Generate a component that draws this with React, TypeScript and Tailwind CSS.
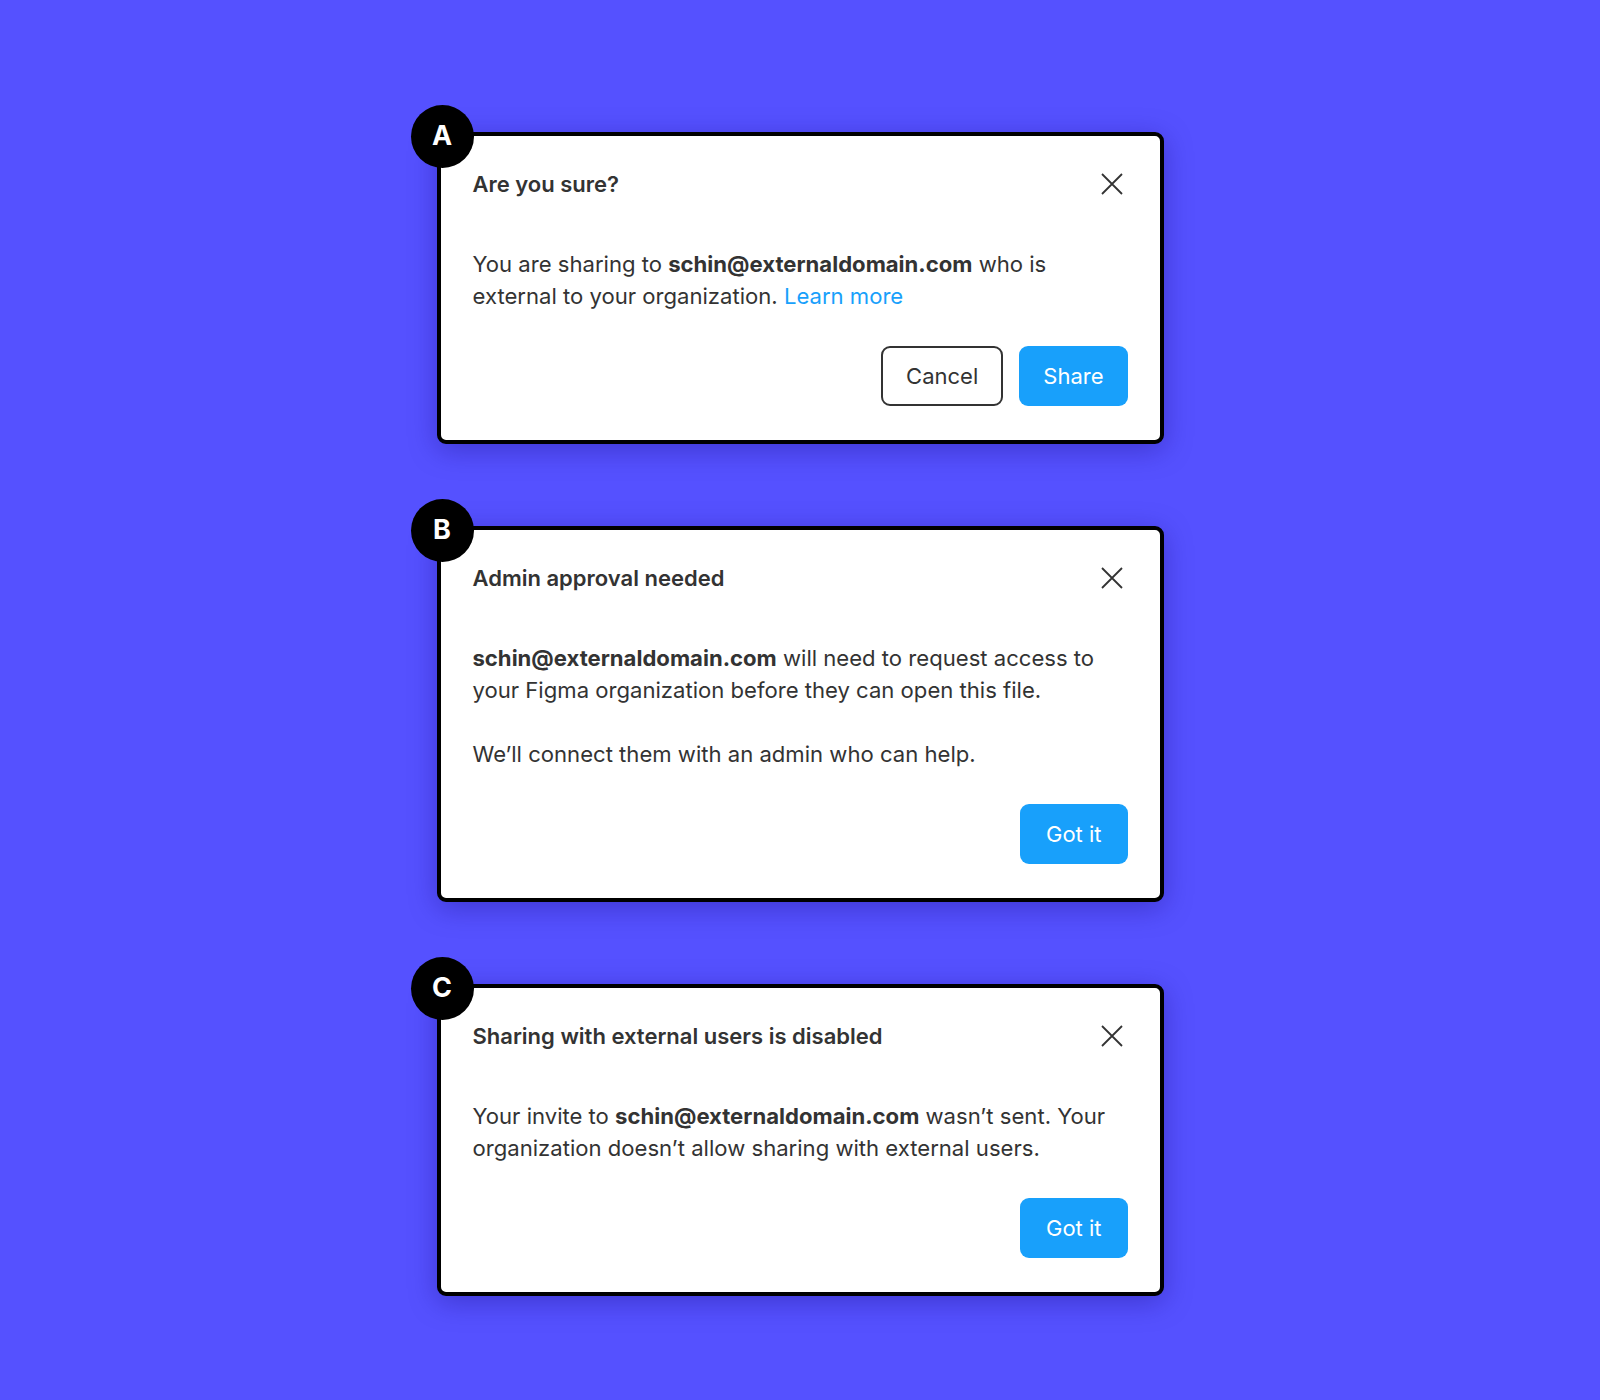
import { ReactNode } from 'react'

const font = { fontFamily: 'Inter, "Noto Sans", sans-serif' }

function CloseIcon() {
  return (
    <svg width="22" height="22" viewBox="0 0 22 22" fill="none" className="shrink-0">
      <path d="M1 1L21 21M21 1L1 21" stroke="#333333" strokeWidth="1.8" />
    </svg>
  )
}

interface DialogProps {
  badge: string
  title: string
  children: ReactNode
  actions: ReactNode
}

function Dialog({ badge, title, children, actions }: DialogProps) {
  return (
    <div className="relative w-[727px]">
      <div className="absolute left-[-26px] top-[-27px] z-10 flex h-[63px] w-[63px] items-center justify-center rounded-full bg-black text-[27px] font-bold text-white">
        {badge}
      </div>
      <div className="rounded-[9px] border-4 border-black bg-white px-8 pt-8 pb-[34px] shadow-[0_6px_28px_rgba(20,10,120,0.35)]">
        <div className="flex items-center justify-between">
          <h2 className="text-[22px] leading-8 font-semibold text-[#333333]">{title}</h2>
          <div className="mr-[5px]">
            <CloseIcon />
          </div>
        </div>
        <div className="mt-12 text-[22.1px] leading-8 text-[#333333]">{children}</div>
        <div className="mt-[34px] flex justify-end gap-4">{actions}</div>
      </div>
    </div>
  )
}

function PrimaryButton({ children, wide }: { children: ReactNode; wide?: boolean }) {
  return (
    <button
      className={
        wide
          ? 'h-[60px] rounded-[9px] bg-[#18A0FB] px-[26px] text-[22px] text-white'
          : 'h-[60px] rounded-[9px] bg-[#18A0FB] px-6 text-[22px] text-white'
      }
    >
      {children}
    </button>
  )
}

function SecondaryButton({ children }: { children: ReactNode }) {
  return (
    <button className="h-[60px] rounded-[9px] border-2 border-[#333333] bg-white px-[23px] text-[22px] text-[#333333]">
      {children}
    </button>
  )
}

export default function App() {
  return (
    <div className="flex min-h-[1400px] w-full flex-col items-center gap-[82px] bg-[#5551FF] pt-[132px]" style={font}>
      <Dialog
        badge="A"
        title="Are you sure?"
        actions={
          <>
            <SecondaryButton>Cancel</SecondaryButton>
            <PrimaryButton>Share</PrimaryButton>
          </>
        }
      >
        <p>
          You are sharing to <span className="font-bold">schin@externaldomain.com</span> who is
          <br />
          external to your organization. <span className="text-[#18A0FB]">Learn more</span>
        </p>
      </Dialog>

      <Dialog badge="B" title="Admin approval needed" actions={<PrimaryButton wide>Got it</PrimaryButton>}>
        <p>
          <span className="font-bold">schin@externaldomain.com</span> will need to request access to
          <br />
          your Figma organization before they can open this file.
        </p>
        <p className="mt-8">We’ll connect them with an admin who can help.</p>
      </Dialog>

      <Dialog badge="C" title="Sharing with external users is disabled" actions={<PrimaryButton wide>Got it</PrimaryButton>}>
        <p>
          Your invite to <span className="font-bold">schin@externaldomain.com</span> wasn’t sent. Your
          <br />
          organization doesn’t allow sharing with external users.
        </p>
      </Dialog>
    </div>
  )
}
